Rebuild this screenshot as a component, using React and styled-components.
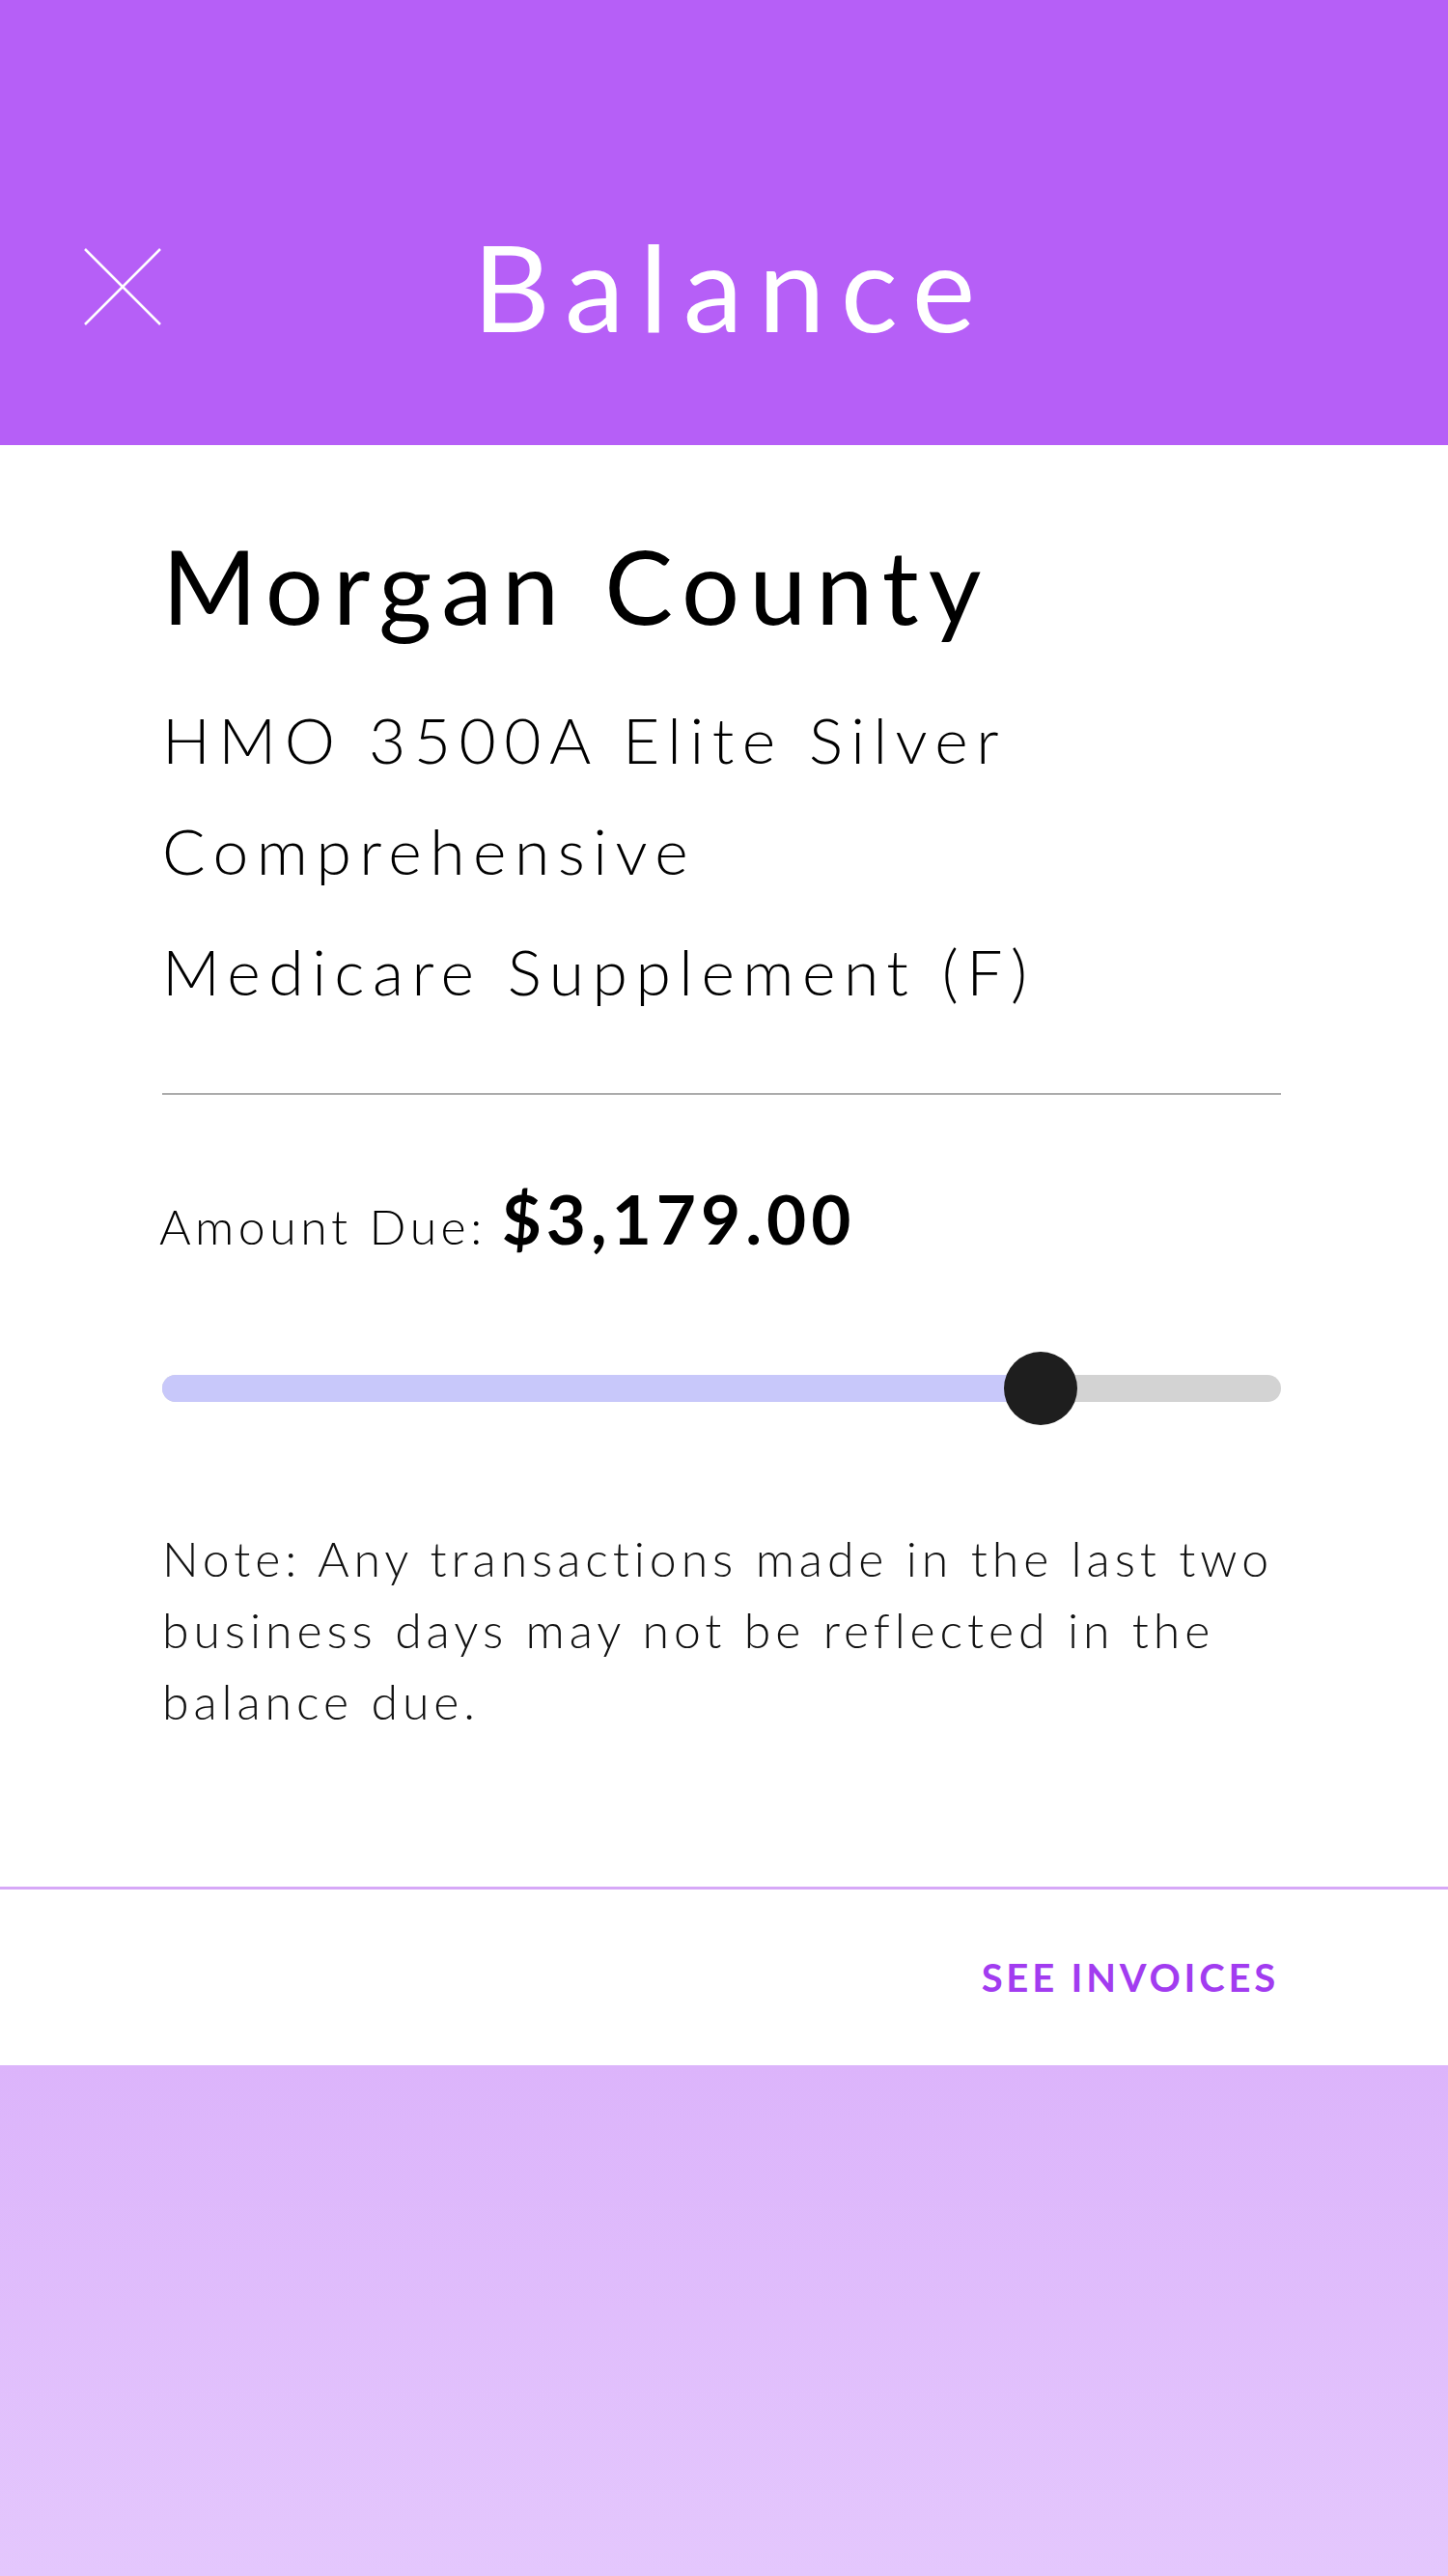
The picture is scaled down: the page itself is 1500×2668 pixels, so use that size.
import React from "react";
import styled, { createGlobalStyle } from "styled-components";

const GlobalStyle = createGlobalStyle`
  body {
    margin: 0;
    background: #ffffff;
    font-family: "Lato", "Liberation Sans", sans-serif;
    -webkit-font-smoothing: antialiased;
  }
`;

const progress = 0.785;

const App = () => {
  return (
    <Page>
      <GlobalStyle />
      <Header>
        <CloseBtn aria-label="close">
          <svg width="80" height="80" viewBox="0 0 80 80">
            <line x1="1" y1="1" x2="79" y2="79" stroke="#fff" strokeWidth="2.5" />
            <line x1="79" y1="1" x2="1" y2="79" stroke="#fff" strokeWidth="2.5" />
          </svg>
        </CloseBtn>
        <Title>Balance</Title>
        <div />
      </Header>

      <Content>
        <County>Morgan County</County>
        <Plan>HMO 3500A Elite Silver Comprehensive</Plan>
        <Plan spaced>Medicare Supplement (F)</Plan>
        <Divider />

        <AmountRow>
          <AmountLabel>Amount Due:</AmountLabel>
          <AmountValue>$3,179.00</AmountValue>
        </AmountRow>

        <Slider>
          <Track>
            <Fill style={{ width: `${progress * 100}%` }} />
          </Track>
          <Thumb style={{ left: `${progress * 100}%` }} />
        </Slider>

        <Note>
          Note: Any transactions made in the last two business days may not be
          reflected in the balance due.
        </Note>
      </Content>

      <Footer>
        <LinkBtn>SEE INVOICES</LinkBtn>
      </Footer>

      <Backdrop />
    </Page>
  );
};

const Page = styled.div`
  width: 1500px;
  min-height: 2668px;
  display: flex;
  flex-direction: column;
`;

const Header = styled.header`
  height: 461px;
  box-sizing: border-box;
  padding-top: 132px;
  background-color: #b65ff7;
  display: grid;
  grid-template-columns: 1fr auto 1fr;
  align-items: center;
`;

const CloseBtn = styled.button`
  justify-self: start;
  margin-left: 87px;
  padding: 0;
  border: none;
  background: none;
  width: 80px;
  height: 80px;
  cursor: pointer;
  svg {
    display: block;
  }
`;

const Title = styled.h1`
  margin: 0 0 0 16px;
  color: #ffffff;
  font-size: 124px;
  font-weight: 400;
  letter-spacing: 16px;
  line-height: 1.2;
`;

const Content = styled.main`
  padding: 82px 173px 155px 168px;
  border-bottom: 3px solid #d6a8f7;
  color: #000;
`;

const County = styled.h2`
  margin: 0 0 38px;
  font-size: 106px;
  font-weight: 400;
  letter-spacing: 10px;
  line-height: 1.2;
`;

const Plan = styled.p`
  margin: ${(props) => (props.spaced ? "10px" : "0")} 0 0;
  width: 1000px;
  font-size: 66px;
  font-weight: 300;
  letter-spacing: ${(props) => (props.spaced ? "8.5px" : "8.5px")};
  line-height: 115px;
`;

const Divider = styled.hr`
  margin: 69px 0 0;
  border: none;
  height: 2px;
  background: #ababab;
`;

const AmountRow = styled.div`
  margin-top: 85px;
  display: flex;
  align-items: baseline;
  gap: 16px;
  line-height: 1.2;
`;

const AmountLabel = styled.span`
  margin-left: -3px;
  font-size: 50px;
  font-weight: 300;
  letter-spacing: 4.5px;
`;

const AmountValue = styled.span`
  font-size: 71px;
  font-weight: 700;
  letter-spacing: 5px;
`;

const Slider = styled.div`
  position: relative;
  margin-top: 96px;
  height: 76px;
  display: flex;
  align-items: center;
`;

const Track = styled.div`
  width: 100%;
  height: 28px;
  border-radius: 14px;
  background: #d3d3d3;
  overflow: hidden;
`;

const Fill = styled.div`
  height: 100%;
  background: #c8c8fa;
`;

const Thumb = styled.div`
  position: absolute;
  top: 0;
  width: 76px;
  height: 76px;
  margin-left: -38px;
  border-radius: 50%;
  background: #1e1e1e;
`;

const Note = styled.p`
  margin: 101px 0 0;
  font-size: 50px;
  font-weight: 300;
  letter-spacing: 4.9px;
  line-height: 74px;
  color: #111;
`;

const Footer = styled.footer`
  height: 182px;
  padding-right: 175px;
  display: flex;
  align-items: center;
  justify-content: flex-end;
  background: #fff;
`;

const LinkBtn = styled.button`
  border: none;
  background: none;
  padding: 0;
  font-family: "Lato", "Liberation Sans", sans-serif;
  font-size: 40px;
  font-weight: 700;
  letter-spacing: 3.8px;
  color: #a23cf0;
  cursor: pointer;
`;

const Backdrop = styled.div`
  flex: 1;
  background: linear-gradient(180deg, #dcb4fb 0%, #e4c7fd 100%);
`;

export default App;
